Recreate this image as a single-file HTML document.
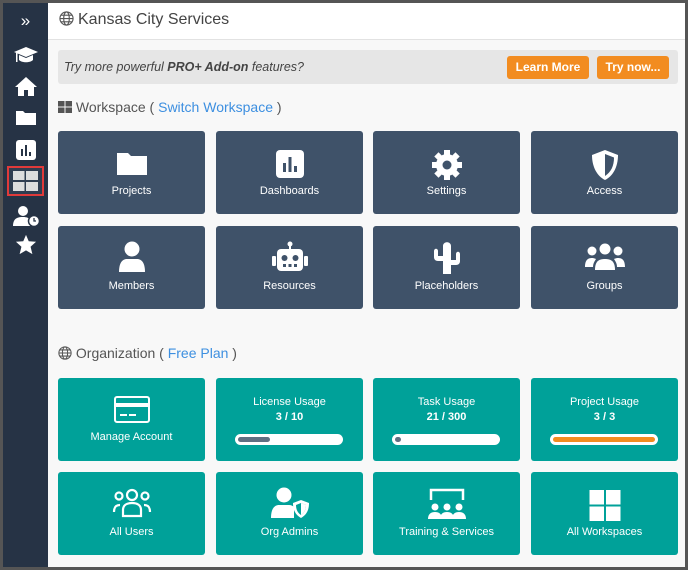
<!DOCTYPE html>
<html><head><style>
*{box-sizing:border-box;margin:0;padding:0}
body{width:688px;height:570px;background:#555;font-family:"Liberation Sans",sans-serif;overflow:hidden;position:relative}
#side{position:absolute;left:3px;top:3px;width:45px;height:564px;background:#263345}
#main{position:absolute;left:48px;top:3px;width:637px;height:564px;background:#f8f8f8}
#hdr{position:absolute;left:0;top:0;width:637px;height:37px;background:#fff;border-bottom:1px solid #e2e2e2;font-size:16px;color:#444;padding:8px 0 0 11px}
#banner{position:absolute;left:10px;top:47px;width:620px;height:34px;background:#e6e6e6;border-radius:3px}
#banner .t{position:absolute;left:6px;top:10px;font-size:12.5px;font-style:italic;color:#444}
.btn{position:absolute;top:6px;height:23px;background:#f28c20;color:#fff;font-size:12px;font-weight:bold;border-radius:3px;text-align:center;line-height:23px}
.sec{position:absolute;left:10px;font-size:14px;color:#555}
.sec a{color:#3d8fe0}
.card{position:absolute;width:147px;height:83px;border-radius:3px;color:#fff;font-size:11px;text-align:center}
.d{background:#3f5269}.g{background:#00a199}
.card svg{position:absolute;left:50%;transform:translateX(-50%)}
.card .l{position:absolute;left:0;right:0;top:54px}
.bar{position:absolute;left:19px;width:108px;height:11px;top:55px;background:#fff;border-radius:6px}
.bar i{position:absolute;left:3px;top:3px;height:5px;border-radius:3px}
.si{position:absolute;left:0;width:45px;display:flex;justify-content:center}
</style></head><body>
<div id="side">
 <div class="si" style="top:8px;color:#fff;font-size:17px">»</div>
 <div class="si" style="top:42px"><svg width="26" height="20" viewBox="0 0 26 20"><path d="M13 2 L25 7 L13 12 L1 7Z" fill="#fff"/><path d="M6 10 v5 c3 3 11 3 14 0 v-5 l-7 3z" fill="#fff"/><rect x="3" y="8" width="1.5" height="9" fill="#fff"/></svg></div>
 <div class="si" style="top:72px"><svg width="24" height="22" viewBox="0 0 24 22"><path d="M12 2 L23 12 H20 V21 H14 V15 H10 V21 H4 V12 H1Z" fill="#fff"/></svg></div>
 <div class="si" style="top:106px"><svg width="22" height="17" viewBox="0 0 22 17"><path d="M1 2 h7 l2 2 h11 v12 h-20z" fill="#fff"/></svg></div>
 <div class="si" style="top:137px"><svg width="20" height="20"><rect width="20" height="20" rx="3" fill="#fff"/><rect x="5" y="9" width="2" height="7" fill="#263345"/><rect x="9" y="5" width="2" height="11" fill="#263345"/><rect x="13" y="12" width="2" height="4" fill="#263345"/></svg></div>
 <div style="position:absolute;left:4px;top:163px;width:37px;height:30px;background:#2f3d50;border:2px solid #e03a3a"><svg style="position:absolute;left:4px;top:3px" width="25" height="20"><rect x="0" y="0" width="11.5" height="9" fill="#ddd"/><rect x="13" y="0" width="12" height="9" fill="#ddd"/><rect x="0" y="11" width="11.5" height="9" fill="#ddd"/><rect x="13" y="11" width="12" height="9" fill="#ddd"/></svg></div>
 <div class="si" style="top:202px"><svg width="28" height="22" viewBox="0 0 28 22"><circle cx="11" cy="6" r="5" fill="#fff"/><path d="M1 21 c0-8 5-9 10-9 c4 0 6 1 7 3 v6z" fill="#fff"/><circle cx="22" cy="16" r="5.5" fill="#fff" stroke="#263345" stroke-width="1.5"/><path d="M22 13 v3 h2" stroke="#263345" stroke-width="1.3" fill="none"/></svg></div>
 <div class="si" style="top:231px"><svg width="22" height="21" viewBox="0 0 24 23"><path d="M12 1 L15 8 L23 8.5 L17 14 L19 22 L12 18 L5 22 L7 14 L1 8.5 L9 8Z" fill="#fff"/></svg></div>
</div>
<div id="main">
 <div id="hdr"><svg width="15" height="15" viewBox="0 0 16 16" style="vertical-align:-2px;margin-right:4px"><g fill="none" stroke="#555" stroke-width="1.2"><circle cx="8" cy="8" r="7"/><ellipse cx="8" cy="8" rx="3" ry="7"/><path d="M1 8h14M2 4.5h12M2 11.5h12"/></g></svg>Kansas City Services</div>
 <div id="banner"><div class="t">Try more powerful <b>PRO+ Add-on</b> features?</div>
  <div class="btn" style="left:449px;width:82px">Learn More</div>
  <div class="btn" style="left:539px;width:72px">Try now...</div></div>
 <div class="sec" style="top:96px"><svg width="14" height="12" style="vertical-align:-1px"><rect width="6.5" height="5.5" fill="#555"/><rect x="7.5" width="6.5" height="5.5" fill="#555"/><rect y="6.5" width="6.5" height="5.5" fill="#555"/><rect x="7.5" y="6.5" width="6.5" height="5.5" fill="#555"/></svg> Workspace ( <a>Switch Workspace</a> )</div>
 <div class="card d" style="left:10px;top:128px"><svg style="top:20px" width="32" height="25" viewBox="0 0 32 25"><path d="M1 2 h11 l3 3 h16 v19 h-30z" fill="#fff"/></svg><div class="l">Projects</div></div>
 <div class="card d" style="left:168px;top:128px"><svg style="top:19px" width="28" height="28"><rect width="28" height="28" rx="4" fill="#fff"/><rect x="7" y="13" width="3" height="9" fill="#3f5269"/><rect x="12.5" y="7" width="3" height="15" fill="#3f5269"/><rect x="18" y="16" width="3" height="6" fill="#3f5269"/></svg><div class="l">Dashboards</div></div>
 <div class="card d" style="left:325px;top:128px"><svg style="top:18px" width="32" height="32" viewBox="0 0 32 32"><g fill="#fff"><circle cx="16" cy="16" r="11"/><g id="t"><rect x="13" y="1" width="6" height="6"/><rect x="13" y="25" width="6" height="6"/><rect x="1" y="13" width="6" height="6"/><rect x="25" y="13" width="6" height="6"/></g><use href="#t" transform="rotate(45 16 16)"/></g><circle cx="16" cy="16" r="4.5" fill="#3f5269"/></svg><div class="l">Settings</div></div>
 <div class="card d" style="left:483px;top:128px"><svg style="top:18px" width="28" height="32" viewBox="0 0 28 32"><path d="M14 1 L27 6 C27 18 22 27 14 31 C6 27 1 18 1 6Z" fill="#fff"/><path d="M14 5 L23 8.5 C23 17 20 23 14 27Z" fill="#3f5269"/></svg><div class="l">Access</div></div>
 <div class="card d" style="left:10px;top:223px"><svg style="top:15px" width="28" height="32" viewBox="0 0 28 32"><circle cx="14" cy="8" r="7.5" fill="#fff"/><path d="M1 31 c0-10 4-13 8-13 h10 c4 0 8 3 8 13z" fill="#fff"/></svg><div class="l">Members</div></div>
 <div class="card d" style="left:168px;top:223px"><svg style="top:15px" width="38" height="32" viewBox="0 0 38 32"><g fill="#fff"><circle cx="19" cy="3" r="2.5"/><rect x="18" y="4" width="2" height="5"/><rect x="6" y="8" width="26" height="22" rx="4"/><rect x="1" y="15" width="4" height="10" rx="1"/><rect x="33" y="15" width="4" height="10" rx="1"/></g><g fill="#3f5269"><circle cx="13.5" cy="17" r="3"/><circle cx="24.5" cy="17" r="3"/><rect x="12" y="23" width="3" height="3"/><rect x="17.5" y="23" width="3" height="3"/><rect x="23" y="23" width="3" height="3"/></g></svg><div class="l">Resources</div></div>
 <div class="card d" style="left:325px;top:223px"><svg style="top:15px" width="36" height="34" viewBox="0 0 36 34"><path d="M14 33 V5 c0-5 8-5 8 0 V33z M14 20 h-5 c-3 0-4-2-4-4 V10 c0-3 4-3 4 0 v5 h5z M22 24 h5 c3 0 4-2 4-4 v-7 c0-3-4-3-4 0 v6 h-5z" fill="#fff"/></svg><div class="l">Placeholders</div></div>
 <div class="card d" style="left:483px;top:223px"><svg style="top:17px" width="40" height="28" viewBox="0 0 40 28"><g fill="#fff"><circle cx="20" cy="6" r="5.5"/><circle cx="7" cy="8" r="4.5"/><circle cx="33" cy="8" r="4.5"/><path d="M10 27 c0-9 4-11 10-11 s10 2 10 11z"/><path d="M0 24 c0-7 3-9 7-9 c2 0 4 1 4 1 c-2 3-3 5-3 8z"/><path d="M40 24 c0-7-3-9-7-9 c-2 0-4 1-4 1 c2 3 3 5 3 8z"/></g></svg><div class="l">Groups</div></div>
 <div class="sec" style="top:342px"><svg width="14" height="14" viewBox="0 0 16 16" style="vertical-align:-2px"><g fill="none" stroke="#555" stroke-width="1.2"><circle cx="8" cy="8" r="7"/><ellipse cx="8" cy="8" rx="3" ry="7"/><path d="M1 8h14M2 4.5h12M2 11.5h12"/></g></svg> Organization ( <a>Free Plan</a> )</div>
 <div class="card g" style="left:10px;top:375px"><svg style="top:18px" width="36" height="27" viewBox="0 0 36 27"><rect x="1" y="1" width="34" height="25" rx="2" fill="none" stroke="#fff" stroke-width="2"/><rect x="1" y="7" width="34" height="4" fill="#fff"/><rect x="6" y="18" width="7" height="2" fill="#fff"/><rect x="15" y="18" width="7" height="2" fill="#fff"/></svg><div class="l" style="top:53px">Manage Account</div></div>
 <div class="card g" style="left:168px;top:375px"><div class="l" style="top:17px;line-height:15px">License Usage<br><b>3 / 10</b></div><div class="bar" style="top:56px"><i style="width:32px;background:#5f6f82"></i></div></div>
 <div class="card g" style="left:325px;top:375px"><div class="l" style="top:17px;line-height:15px">Task Usage<br><b>21 / 300</b></div><div class="bar" style="top:56px"><i style="width:6px;background:#5f6f82"></i></div></div>
 <div class="card g" style="left:483px;top:375px"><div class="l" style="top:17px;line-height:15px">Project Usage<br><b>3 / 3</b></div><div class="bar" style="top:56px"><i style="width:102px;background:#f28c20"></i></div></div>
 <div class="card g" style="left:10px;top:469px"><svg style="top:16px" width="40" height="30" viewBox="0 0 40 30"><g fill="none" stroke="#fff" stroke-width="2.2"><circle cx="20" cy="7" r="5"/><circle cx="7" cy="8" r="3.5"/><circle cx="33" cy="8" r="3.5"/><path d="M11 28 v-6 c0-5 4-7 9-7 s9 2 9 7 v6z"/><path d="M2 24 c0-5 2-7 6-7"/><path d="M38 24 c0-5-2-7-6-7"/></g></svg><div class="l">All Users</div></div>
 <div class="card g" style="left:168px;top:469px"><svg style="top:15px" width="40" height="32" viewBox="0 0 40 32"><circle cx="14" cy="8" r="7.5" fill="#fff"/><path d="M1 31 c0-10 4-13 8-13 h10 c2 0 4 1 5 2 v11z" fill="#fff"/><path d="M31 13 L39 16 C39 24 36 28 31 31 C26 28 23 24 23 16Z" fill="#fff"/><path d="M31 16 L36 18 C36 23 34 26 31 28 C28 26 26 23 26 18Z" fill="#00a199"/><path d="M31 16 L36 18 C36 23 34 26 31 28Z" fill="#fff"/></svg><div class="l">Org Admins</div></div>
 <div class="card g" style="left:325px;top:469px"><svg style="top:16px" width="40" height="32" viewBox="0 0 40 32"><path d="M4 12 V2 H36 V12" fill="none" stroke="#fff" stroke-width="2.5"/><g fill="#fff"><circle cx="8" cy="19" r="3.5"/><circle cx="20" cy="19" r="3.5"/><circle cx="32" cy="19" r="3.5"/><path d="M1 31 c0-5 3-7 7-7 s7 2 7 7z"/><path d="M13 31 c0-5 3-7 7-7 s7 2 7 7z"/><path d="M25 31 c0-5 3-7 7-7 s7 2 7 7z"/></g></svg><div class="l">Training &amp; Services</div></div>
 <div class="card g" style="left:483px;top:469px"><svg style="top:18px" width="31" height="31"><rect width="14.5" height="14.5" fill="#fff"/><rect x="16.5" width="14.5" height="14.5" fill="#fff"/><rect y="16.5" width="14.5" height="14.5" fill="#fff"/><rect x="16.5" y="16.5" width="14.5" height="14.5" fill="#fff"/></svg><div class="l">All Workspaces</div></div>
</div>
</body></html>
